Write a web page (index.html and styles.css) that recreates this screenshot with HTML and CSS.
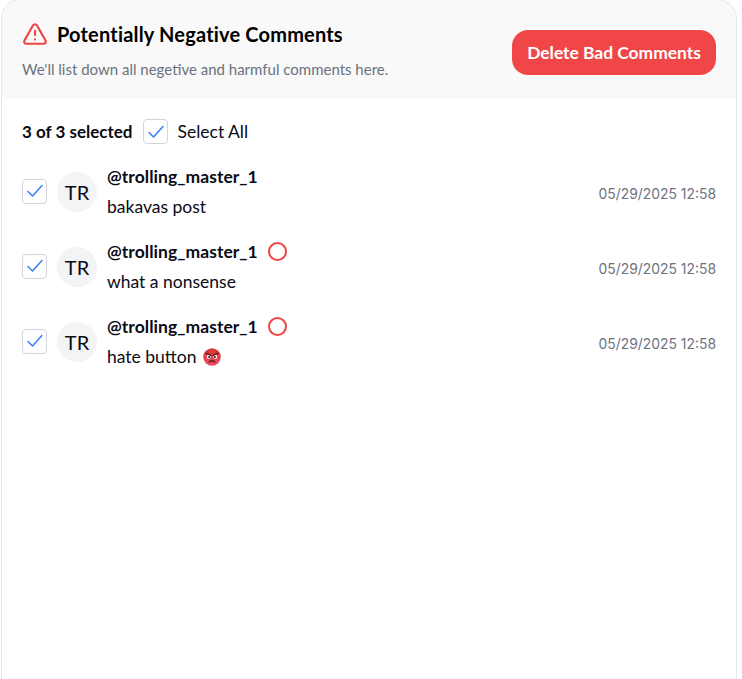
FILE: index.html
```html
<!doctype html>
<html>
<head>
  <meta charset="utf-8" />
  <title>Potentially Negative Comments</title>
  <link rel="stylesheet" href="styles.css">
</head>

<body>
  <div class="card">
    <div class="card-head">
      <div class="head-text">
        <h1>
          <svg class="warn" width="26" height="26" viewBox="0 0 24 24" fill="none" stroke="#ef4444" stroke-width="2" stroke-linecap="round" stroke-linejoin="round"><path d="m21.73 18-8-14a2 2 0 0 0-3.48 0l-8 14A2 2 0 0 0 4 21h16a2 2 0 0 0 1.73-3"/><path d="M12 9v4"/><path d="M12 17h.01"/></svg>
          Potentially Negative Comments
        </h1>
        <p>We'll list down all negetive and harmful comments here.</p>
      </div>
      <button class="delete-btn">Delete Bad Comments</button>
    </div>

    <div class="select-bar">
      <b>3 of 3 selected</b>
      <span class="check"><svg width="18" height="18" viewBox="0 0 18 18" fill="none" stroke="#3b82f6" stroke-width="1.6" stroke-linecap="round" stroke-linejoin="round"><path d="M2 9.5 6.5 14 16 3.5"/></svg></span>
      <span class="select-all">Select All</span>
    </div>

    <div class="list">
      <div class="row">
        <span class="check"><svg width="18" height="18" viewBox="0 0 18 18" fill="none" stroke="#3b82f6" stroke-width="1.6" stroke-linecap="round" stroke-linejoin="round"><path d="M2 9.5 6.5 14 16 3.5"/></svg></span>
        <div class="avatar">TR</div>
        <div class="body">
          <div class="name">@trolling_master_1</div>
          <div class="text">bakavas post</div>
        </div>
        <time>05/29/2025 12:58</time>
      </div>
      <div class="row">
        <span class="check"><svg width="18" height="18" viewBox="0 0 18 18" fill="none" stroke="#3b82f6" stroke-width="1.6" stroke-linecap="round" stroke-linejoin="round"><path d="M2 9.5 6.5 14 16 3.5"/></svg></span>
        <div class="avatar">TR</div>
        <div class="body">
          <div class="name">@trolling_master_1 <i class="ring"></i></div>
          <div class="text">what a nonsense</div>
        </div>
        <time>05/29/2025 12:58</time>
      </div>
      <div class="row">
        <span class="check"><svg width="18" height="18" viewBox="0 0 18 18" fill="none" stroke="#3b82f6" stroke-width="1.6" stroke-linecap="round" stroke-linejoin="round"><path d="M2 9.5 6.5 14 16 3.5"/></svg></span>
        <div class="avatar">TR</div>
        <div class="body">
          <div class="name">@trolling_master_1 <i class="ring"></i></div>
          <div class="text">hate button
            <svg class="emoji" width="18" height="18" viewBox="0 0 18 18"><defs><linearGradient id="angry" x1="0" y1="0" x2="0" y2="1"><stop offset="0" stop-color="#d8342f"/><stop offset="1" stop-color="#ee4f6a"/></linearGradient></defs><circle cx="9" cy="9" r="8.8" fill="url(#angry)"/><circle cx="5.8" cy="8.8" r="2.1" fill="#fff"/><circle cx="12.2" cy="8.8" r="2.1" fill="#fff"/><circle cx="6.2" cy="9.1" r="1.1" fill="#222"/><circle cx="11.8" cy="9.1" r="1.1" fill="#222"/><path d="M2.8 5.2 7.8 7.4M15.2 5.2 10.2 7.4" stroke="#5a1a1a" stroke-width="1.3" stroke-linecap="round"/><path d="M6.2 14c1-1.7 4.6-1.7 5.6 0" fill="none" stroke="#5a1a1a" stroke-width="1.3" stroke-linecap="round"/></svg>
          </div>
        </div>
        <time>05/29/2025 12:58</time>
      </div>
    </div>
  </div>
</body>
</html>
```

FILE: styles.css
```css
html, body {
  height: 100%;
}
body {
  margin: 0;
  background: #fff;
  color: #0a0a14;
  font-family: "Lato", "Noto Sans", sans-serif;
  font-size: 17.5px;
  overflow: hidden;
}
.card {
  box-sizing: border-box;
  width: 736px;
  height: calc(100% + 1px);
  margin: -1px 0 0 1px;
  background: #fff;
  border: 1px solid #e5e7eb;
  border-bottom: 0;
  border-radius: 20px 20px 0 0;
  overflow: hidden;
}
.card-head {
  display: flex;
  align-items: flex-start;
  justify-content: space-between;
  height: 99px;
  box-sizing: border-box;
  padding: 20px 20px 0 20px;
  background: #f9f9f9;
}
.card-head h1 {
  display: flex;
  align-items: center;
  gap: 9px;
  margin: 0;
  color: #000;
  font-size: 20px;
  font-weight: 700;
  letter-spacing: 0.18px;
  line-height: 28px;
}
.card-head p {
  margin: 11px 0 0;
  color: #6b7280;
  font-size: 15px;
  line-height: 20px;
}
.delete-btn {
  width: 204px;
  height: 45px;
  margin-top: 10px;
  border: 0;
  border-radius: 16px;
  background: #f04648;
  color: #fff;
  font-family: inherit;
  font-size: 17.4px;
  font-weight: 700;
}
.select-bar {
  display: flex;
  align-items: center;
  gap: 11px;
  padding: 20px 20px 0;
  font-size: 17px;
}
.check {
  display: flex;
  align-items: center;
  justify-content: center;
  box-sizing: border-box;
  width: 25px;
  height: 25px;
  flex: none;
  border: 1px solid #d1d5db;
  border-radius: 4px;
  background: #fff;
}
.select-all {
  margin-left: -2px;
  font-size: 17.5px;
}
.list {
  display: flex;
  flex-direction: column;
  gap: 15px;
  padding: 18px 20px 0;
}
.row {
  display: flex;
  align-items: center;
  height: 60px;
}
.row .check {
  margin-top: -2px;
}
.avatar {
  display: flex;
  align-items: center;
  justify-content: center;
  width: 40px;
  height: 40px;
  flex: none;
  margin: 0 10px;
  border-radius: 50%;
  background: #f3f4f6;
  font-size: 20px;
}
.body {
  flex: 1;
  margin-top: -2px;
}
.name {
  display: flex;
  align-items: center;
  gap: 10px;
  height: 26px;
  font-weight: 700;
  letter-spacing: 0.05px;
}
.ring {
  box-sizing: border-box;
  width: 19px;
  height: 19px;
  border: 2px solid #ef4444;
  border-radius: 50%;
}
.text {
  display: flex;
  align-items: center;
  gap: 7px;
  height: 24px;
  margin-top: 5px;
}
time {
  margin-top: 4px;
  color: #6b7280;
  font-family: "Inter", sans-serif;
  font-size: 13.9px;
}
```
